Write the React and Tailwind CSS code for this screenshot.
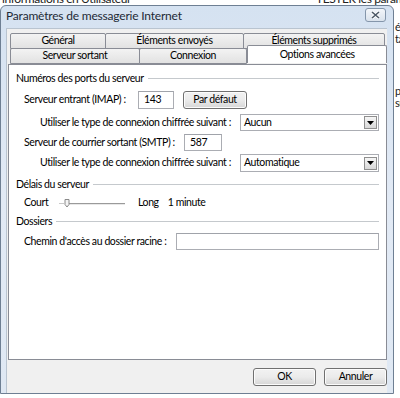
import React from 'react'

const FONT = { fontFamily: 'Lato, "Noto Sans", sans-serif' }

function Tab({ label, w, selected }) {
  if (selected) {
    return (
      <div className={`relative z-10 -mt-[3px] h-[18px] ${w} flex items-center justify-center bg-white border border-b-0 border-[#898c95] rounded-t-[2px] -mb-px`}>
        {label}
      </div>
    )
  }
  return (
    <div className={`h-[16px] ${w} flex items-center justify-center bg-gradient-to-b from-[#f3f3f3] to-[#e2e2e2] border border-[#898c95] -ml-px first:ml-0 rounded-t-[2px]`}>
      {label}
    </div>
  )
}

function GroupHeader({ label, className }) {
  return (
    <div className={`flex items-center h-[14px] pl-[7px] pr-[7px] ${className}`}>
      <span>{label}</span>
      <div className="flex-1 ml-[4px] border-t border-[#c5c9cd] border-b-white border-b" />
    </div>
  )
}

function TextBox({ value, w }) {
  return (
    <div className={`h-full ${w} shrink-0 bg-white border border-[#abadb3] border-t-[#a0a3aa] flex items-center px-[5px]`}>
      {value}
    </div>
  )
}

function Combo({ value }) {
  return (
    <div className="h-full w-[139px] shrink-0 bg-white border border-[#abadb3] flex items-center pl-[3px] pr-px">
      <span className="flex-1">{value}</span>
      <div className="w-[13px] h-[13px] border border-[#8f8f8f] bg-gradient-to-b from-[#f6f6f6] to-[#d8d8d8] flex items-center justify-center">
        <svg width="7" height="4" viewBox="0 0 7 4"><path d="M0 0h7L3.5 4z" fill="#000" /></svg>
      </div>
    </div>
  )
}

function Button({ label, w }) {
  return (
    <div className={`h-full ${w} shrink-0 flex items-center justify-center rounded-[3px] border border-[#707070] bg-gradient-to-b from-[#f2f2f2] via-[#ebebeb] to-[#d6d6d6] shadow-[inset_0_0_0_1px_#fcfcfc]`}>
      {label}
    </div>
  )
}

export default function App() {
  return (
    <div className="w-[400px] h-[398px] bg-white overflow-hidden text-[10.5px] tracking-[-0.4px] whitespace-nowrap text-black" style={FONT}>
      {/* window behind, only a sliver shows */}
      <div className="h-[5px] overflow-hidden">
        <div className="-mt-[10px] flex text-[12px] text-[#222]">
          <span className="ml-[2px]">informations en Utilisateur</span>
          <span className="ml-[185px]">TESTER les paramètres</span>
        </div>
      </div>

      <div className="flex">
        <div className="w-[394px] h-[389px] shrink-0 border border-[#6e7f93] rounded-t-[6px] bg-gradient-to-b from-[#d5e2f1] via-[#e2eaf5] to-[#dfe8f3] flex flex-col">
          {/* title bar */}
          <div className="h-[22px] flex items-center justify-between pl-[5px] pr-[7px] shrink-0">
            <span className="text-[12px] tracking-[-0.2px] -mt-[3px] text-[#1e2a36]">Paramètres de messagerie Internet</span>
            <div className="w-[21px] h-[14px] -mt-[4px] rounded-[3px] border border-[#8496ab] bg-gradient-to-b from-[#f3f6fa] to-[#d9e2ec] flex items-center justify-center">
              <svg width="9" height="8" viewBox="0 0 9 8">
                <path d="M1 1l7 6M8 1L1 7" stroke="#fff" strokeWidth="3" />
                <path d="M1 1l7 6M8 1L1 7" stroke="#4b5866" strokeWidth="1.6" />
              </svg>
            </div>
          </div>

          {/* client area */}
          <div className="ml-[5px] w-[381px] flex-1 bg-[#f0f0f0] border-l border-t border-[#b9c4d0] pt-[4px] flex flex-col">
            <div className="pl-[3px] flex">
              <Tab label="Général" w="w-[96px]" />
              <Tab label="Éléments envoyés" w="w-[139px]" />
              <Tab label="Éléments supprimés" w="w-[142px]" />
            </div>
            <div className="pl-[3px] flex -mt-px">
              <Tab label="Serveur sortant" w="w-[130px]" />
              <Tab label="Connexion" w="w-[109px]" />
              <Tab label="Options avancées" w="w-[140px]" selected />
            </div>

            {/* tab panel */}
            <div className="ml-[1px] w-[379px] h-[296px] bg-white border border-[#898c95] flex flex-col">
              <GroupHeader label="Numéros des ports du serveur" className="mt-[7px]" />

              <div className="flex items-center h-[18px] mt-[5px] pl-[15px]">
                <span className="w-[114px] shrink-0">Serveur entrant (IMAP) :</span>
                <TextBox value="143" w="w-[36px]" />
                <div className="ml-[9px] h-full">
                  <Button label="Par défaut" w="w-[64px]" />
                </div>
              </div>

              <div className="flex items-center h-[17px] mt-[5px] pl-[31px]">
                <span className="w-[200px] shrink-0">Utiliser le type de connexion chiffrée suivant :</span>
                <Combo value="Aucun" />
              </div>

              <div className="flex items-center h-[17px] mt-[3px] pl-[15px]">
                <span className="w-[160px] shrink-0">Serveur de courrier sortant (SMTP) :</span>
                <TextBox value="587" w="w-[38px]" />
              </div>

              <div className="flex items-center h-[18px] mt-[3px] pl-[31px]">
                <span className="w-[200px] shrink-0">Utiliser le type de connexion chiffrée suivant :</span>
                <Combo value="Automatique" />
              </div>

              <GroupHeader label="Délais du serveur" className="mt-[6px]" />

              <div className="flex items-center h-[14px] mt-[4px] pl-[15px]">
                <span className="w-[35px] shrink-0">Court</span>
                <svg width="66" height="10" viewBox="0 0 66 10" className="shrink-0">
                  <path d="M0 5.5h5" stroke="#c8c8c8" strokeWidth="1" />
                  <path d="M9 5.5h57" stroke="#9a9a9a" strokeWidth="1" />
                  <path d="M9 6.5h57" stroke="#e8e8e8" strokeWidth="1" />
                  <path d="M6 1.5h4v5l-2 2.5-2-2.5z" fill="#f4f4f4" stroke="#8a8a8a" strokeWidth="1" />
                </svg>
                <span className="ml-[13px]">Long</span>
                <span className="ml-[9px]">1 minute</span>
              </div>

              <GroupHeader label="Dossiers" className="mt-[5px]" />

              <div className="flex items-center h-[17px] mt-[4px] pl-[15px]">
                <span className="w-[152px] shrink-0">Chemin d'accès au dossier racine :</span>
                <TextBox value="" w="w-[203px]" />
              </div>
            </div>

            {/* buttons */}
            <div className="flex h-[18px] mt-[8px] pl-[246px] gap-[8px]">
              <Button label="OK" w="w-[63px]" />
              <Button label="Annuler" w="w-[63px]" />
            </div>
          </div>
        </div>

        {/* window behind, right sliver */}
        <div className="flex-1 overflow-hidden text-[11px] leading-[12px] pt-[16px] pl-px text-[#222]">
          <div>é</div>
          <div>ta</div>
          <div className="mt-[40px]">p</div>
          <div>su</div>
        </div>
      </div>
    </div>
  )
}
